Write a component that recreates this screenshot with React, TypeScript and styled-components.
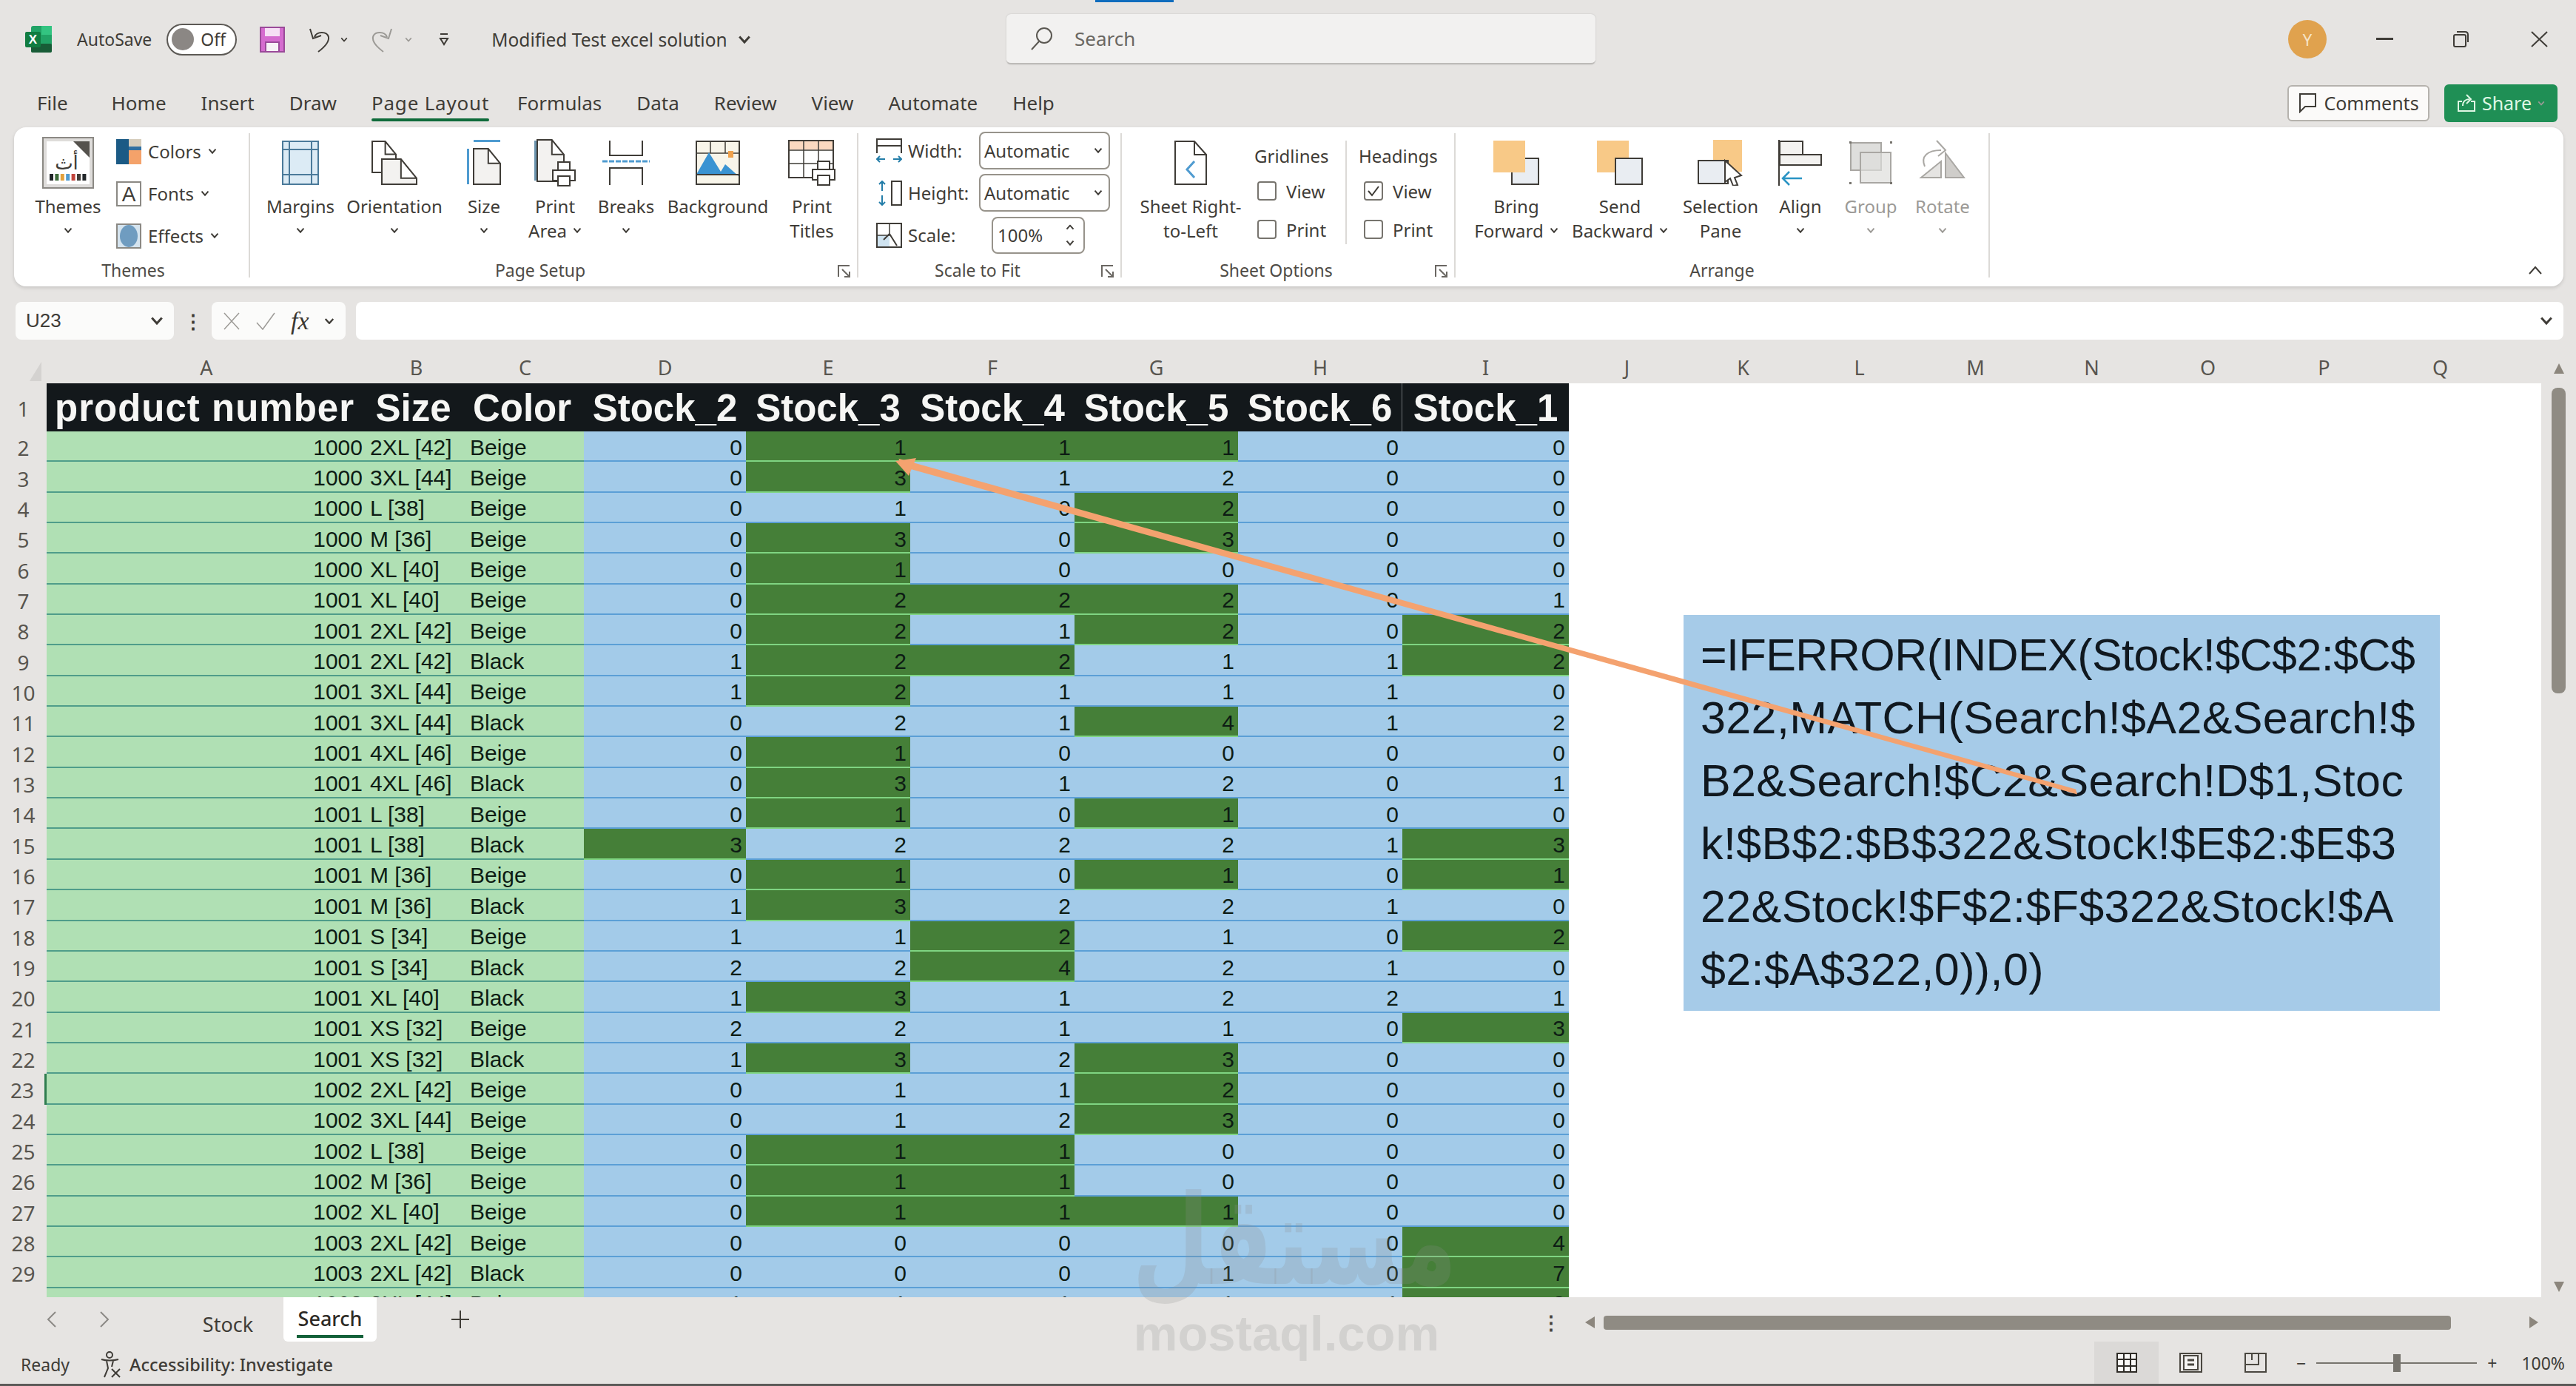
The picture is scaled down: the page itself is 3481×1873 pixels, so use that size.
import React, { FC, ReactNode } from 'react';
import styled, { createGlobalStyle } from 'styled-components';

const CHROME = '#e6e4e2';
const INK = '#3f3c37';
const SOFT = '#9c9a96';
const BLUE = '#4f9bd0';
const ORANGE = '#f8c987';
const COLS = '63px 432px 135px 159px 219px 222px 222px 221px 222px 225px';
const FONT = `'Noto Sans', 'Open Sans', sans-serif`;
const SHEET_FONT = `'Liberation Sans', Arial, sans-serif`;

const GlobalStyle = createGlobalStyle`
  html, body {
    margin: 0;
    padding: 0;
    background: ${CHROME};
  }
  body {
    font-family: ${FONT};
    color: ${INK};
  }
`;

const Page = styled.div`
  position: relative;
  width: 3481px;
  height: 1873px;
  overflow: hidden;
  display: flex;
  flex-direction: column;
  background: ${CHROME};
`;

/* ---------- title bar ---------- */

const TitleRow = styled.div`
  height: 106px;
  display: flex;
  align-items: center;
  flex-shrink: 0;
`;

const LeftCluster = styled.div`
  width: 1360px;
  display: flex;
  align-items: center;
  padding-left: 34px;
  box-sizing: border-box;
`;

const TitleItem = styled.div<{ $ml?: number }>`
  margin-left: ${(p) => p.$ml ?? 0}px;
  display: flex;
  align-items: center;
`;

const AutoSave = styled.span`
  font-size: 23px;
  white-space: nowrap;
`;

const Toggle = styled.div`
  width: 95px;
  height: 43px;
  box-sizing: border-box;
  border: 2px solid #5c5955;
  border-radius: 22px;
  background: #fff;
  display: flex;
  align-items: center;
  padding-left: 5px;
  gap: 9px;
  font-size: 23px;
`;

const Knob = styled.span`
  width: 30px;
  height: 30px;
  border-radius: 50%;
  background: #8b8784;
`;

const DocTitle = styled.span`
  font-size: 24.5px;
  white-space: nowrap;
`;

const TopMark = styled.div`
  position: absolute;
  left: 1480px;
  top: 0;
  width: 106px;
  height: 3px;
  background: #0f6cbd;
`;

const SearchBox = styled.div`
  width: 796px;
  height: 68px;
  box-sizing: border-box;
  background: #f2f1f0;
  border-radius: 6px;
  border-bottom: 2px solid #bdbbb8;
  box-shadow: 0 0 2px rgba(0, 0, 0, 0.18);
  display: flex;
  align-items: center;
  padding-left: 31px;
  gap: 29px;
  font-size: 26px;
  color: #6a6762;
`;

const RightCluster = styled.div`
  flex: 1;
  display: flex;
  align-items: center;
  justify-content: flex-end;
  padding-right: 38px;
`;

const Avatar = styled.div`
  width: 52px;
  height: 52px;
  border-radius: 50%;
  background: #e0a24e;
  color: #f6e3c6;
  font-size: 22px;
  display: flex;
  align-items: center;
  justify-content: center;
`;

/* ---------- menu ---------- */

const MenuRow = styled.div`
  height: 66px;
  flex-shrink: 0;
  display: flex;
  align-items: center;
  padding-left: 50px;
  gap: 47px;
  position: relative;
`;

const MenuItem = styled.span<{ $active?: boolean; $mr?: number }>`
  font-size: 26px;
  white-space: nowrap;
  position: relative;
  margin-right: ${(p) => p.$mr ?? 0}px;
  line-height: 40px;
  letter-spacing: ${(p) => (p.$active ? '0.8px' : '0')};
  &::after {
    content: '';
    display: ${(p) => (p.$active ? 'block' : 'none')};
    position: absolute;
    left: 0;
    right: 0;
    bottom: -5px;
    height: 4px;
    background: #0f6b3a;
    border-radius: 2px;
  }
`;

const RightActions = styled.div`
  margin-left: auto;
  margin-right: 25px;
  display: flex;
  align-items: center;
  gap: 20px;
`;

const CommentsButton = styled.div`
  width: 192px;
  height: 49px;
  box-sizing: border-box;
  background: #fbfaf9;
  border: 2px solid #b5b2ad;
  border-radius: 6px;
  display: flex;
  align-items: center;
  justify-content: center;
  gap: 9px;
  font-size: 25px;
`;

const ShareButton = styled.div`
  width: 153px;
  height: 51px;
  box-sizing: border-box;
  background: #1f8f55;
  border-radius: 6px;
  color: #dff7e4;
  display: flex;
  align-items: center;
  justify-content: center;
  gap: 8px;
  font-size: 25px;
`;

/* ---------- ribbon ---------- */

const Ribbon = styled.div`
  margin-left: 19px;
  width: 3445px;
  height: 215px;
  flex-shrink: 0;
  box-sizing: border-box;
  background: #fff;
  border-radius: 16px;
  box-shadow: 0 2px 5px rgba(0, 0, 0, 0.14);
  display: flex;
  padding: 8px 0 12px;
  position: relative;
`;

const Group = styled.div<{ $w: number }>`
  width: ${(p) => p.$w}px;
  height: 195px;
  flex-shrink: 0;
  box-sizing: border-box;
  border-right: 2px solid #dcdad7;
  display: flex;
  flex-direction: column;
  position: relative;
`;

const GroupBody = styled.div<{ $pl?: number; $flush?: boolean }>`
  flex: 1;
  min-height: 0;
  display: flex;
  align-items: flex-start;
  padding-left: ${(p) => p.$pl ?? 0}px;
  padding-top: ${(p) => (p.$flush ? 0 : 10)}px;
`;

const GroupLabel = styled.div<{ $pr?: number; $pl?: number }>`
  height: 32px;
  margin-bottom: -6px;
  line-height: 32px;
  font-size: 23px;
  text-align: center;
  color: #4e4b46;
  padding-right: ${(p) => p.$pr ?? 0}px;
  padding-left: ${(p) => p.$pl ?? 0}px;
`;

const Launcher = styled.svg`
  position: absolute;
  right: 8px;
  bottom: -1px;
`;

const BigButton = styled.div<{ $w: number; $muted?: boolean }>`
  width: ${(p) => p.$w}px;
  flex-shrink: 0;
  display: flex;
  flex-direction: column;
  align-items: center;
  color: ${(p) => (p.$muted ? SOFT : INK)};
  font-size: 24px;
`;

const IconSlot = styled.div`
  height: 60px;
  display: flex;
  align-items: center;
  justify-content: center;
  margin-bottom: 12px;
`;

const BigLine = styled.div`
  height: 33px;
  line-height: 33px;
  white-space: nowrap;
  display: flex;
  align-items: center;
  gap: 8px;
`;

const SmallStack = styled.div`
  margin-left: 6px;
  margin-top: -14px;
  display: flex;
  flex-direction: column;
`;

const SmallRow = styled.div`
  height: 57px;
  display: flex;
  align-items: center;
  gap: 9px;
  font-size: 24px;
`;

const FieldStack = styled.div`
  display: flex;
  flex-direction: column;
  gap: 6px;
  margin-top: -2px;
`;

const Field = styled.div`
  height: 51px;
  display: flex;
  align-items: center;
  font-size: 24px;
`;

const FieldLabel = styled.span`
  width: 96px;
  margin-left: 8px;
  white-space: nowrap;
`;

const SelectBox = styled.div`
  width: 177px;
  height: 51px;
  box-sizing: border-box;
  border: 2px solid #97938b;
  border-radius: 8px;
  display: flex;
  align-items: center;
  justify-content: space-between;
  padding: 0 8px 0 5px;
  font-size: 24px;
`;

const SpinBox = styled.div`
  width: 126px;
  height: 50px;
  box-sizing: border-box;
  margin-left: 17px;
  border: 2px solid #97938b;
  border-radius: 8px;
  display: flex;
  align-items: center;
  justify-content: space-between;
  padding: 0 12px 0 6px;
  font-size: 24px;
`;

const SpinArrows = styled.div`
  display: flex;
  flex-direction: column;
  gap: 12px;
`;

const SpinUp = styled.span`
  display: flex;
  transform: scaleY(-1);
`;

const OptionColumn = styled.div<{ $w: number; $pl?: number; $divider?: boolean }>`
  width: ${(p) => p.$w}px;
  box-sizing: border-box;
  padding-left: ${(p) => p.$pl ?? 0}px;
  border-right: ${(p) => (p.$divider ? '2px solid #dcdad7' : 'none')};
  height: 140px;
  font-size: 24px;
`;

const OptionHead = styled.div`
  height: 42px;
  line-height: 42px;
`;

const OptionRow = styled.div<{ $indent?: number }>`
  height: 52px;
  display: flex;
  align-items: center;
  gap: 13px;
  padding-left: ${(p) => p.$indent ?? 0}px;
`;

const CheckBox = styled.span`
  width: 26px;
  height: 26px;
  box-sizing: border-box;
  border: 2px solid #77746e;
  border-radius: 4px;
  display: flex;
  align-items: center;
  justify-content: center;
`;

const CollapseButton = styled.svg`
  position: absolute;
  right: 28px;
  bottom: 16px;
`;

/* ---------- formula bar ---------- */

const FormulaBar = styled.div`
  height: 51px;
  margin-top: 21px;
  flex-shrink: 0;
  padding-left: 21px;
  display: flex;
  align-items: center;
`;

const NameBox = styled.div`
  width: 214px;
  height: 51px;
  box-sizing: border-box;
  background: #fbfbfa;
  border-radius: 8px;
  display: flex;
  align-items: center;
  justify-content: space-between;
  padding: 0 14px;
  font-size: 26px;
  font-family: ${SHEET_FONT};
`;

const BarDots = styled.div`
  width: 51px;
  text-align: center;
  font-size: 26px;
  font-weight: 700;
  line-height: 40px;
`;

const FxBox = styled.div`
  width: 181px;
  height: 51px;
  box-sizing: border-box;
  background: #fbfbfa;
  border-radius: 8px;
  display: flex;
  align-items: center;
  padding-left: 15px;
  gap: 20px;
`;

const FxMark = styled.span`
  font-family: 'Liberation Serif', serif;
  font-style: italic;
  font-size: 34px;
  font-weight: 400;
  color: #3a3731;
`;

const FormulaInput = styled.div`
  margin-left: 14px;
  width: 2983px;
  height: 51px;
  box-sizing: border-box;
  background: #fff;
  border-radius: 8px;
  display: flex;
  align-items: center;
  justify-content: flex-end;
  padding-right: 14px;
`;

/* ---------- sheet ---------- */

const SheetArea = styled.div`
  height: 1294px;
  flex-shrink: 0;
  display: flex;
`;

const GridPane = styled.div`
  width: 3434px;
  display: flex;
  flex-direction: column;
  overflow: hidden;
`;

const ColumnHeaders = styled.div`
  height: 59px;
  flex-shrink: 0;
  display: grid;
  grid-template-columns: ${COLS} repeat(8, 157px) 1fr;
  position: relative;
`;

const ColumnLetter = styled.div`
  display: flex;
  align-items: flex-end;
  justify-content: center;
  padding-bottom: 3px;
  font-size: 27px;
  color: #58554f;
  line-height: 36px;
`;

const SelectAll = styled.svg`
  position: absolute;
  left: 40px;
  bottom: 3px;
`;

const Rows = styled.div`
  flex: 1;
  background: #fff;
  overflow: hidden;
`;

const HeaderRow = styled.div`
  height: 65px;
  display: grid;
  grid-template-columns: ${COLS};
  width: 2120px;
`;

const HeaderCell = styled.div<{ $wide?: boolean; $rule?: boolean; $nudge?: boolean }>`
  background: #13181b;
  color: #f6f6f4;
  font-family: ${SHEET_FONT};
  font-weight: 700;
  font-size: 51px;
  display: flex;
  align-items: center;
  justify-content: center;
  white-space: nowrap;
  box-sizing: border-box;
  padding-top: 2px;
  padding-right: ${(p) => (p.$nudge ? 8 : p.$wide ? 5 : 0)}px;
  letter-spacing: ${(p) => (p.$wide ? '1px' : '0')};
  border-right: ${(p) => (p.$rule ? '1px solid #6d7376' : 'none')};
`;

const DataRow = styled.div`
  height: 41.35px;
  display: grid;
  grid-template-columns: ${COLS};
  width: 2120px;
`;

const RowNumber = styled.div<{ $current?: boolean }>`
  background: ${CHROME};
  font-size: 28px;
  color: #58554f;
  display: flex;
  align-items: center;
  justify-content: center;
  box-sizing: border-box;
  padding-top: 3px;
  border-right: ${(p) => (p.$current ? '3px solid #2f7d4f' : 'none')};
  line-height: 1;
`;

type Tone = 'green' | 'blue' | 'dark';

const toneFill: Record<Tone, string> = { green: '#b0e0b4', blue: '#a3cbe9', dark: '#457f38' };
const toneLine: Record<Tone, string> = { green: '#4f9d8a', blue: '#5b9fd6', dark: '#7fd582' };

const Cell = styled.div<{ $tone: Tone; $end?: boolean }>`
  background: ${(p) => toneFill[p.$tone]};
  border-bottom: 2px solid ${(p) => toneLine[p.$tone]};
  box-sizing: border-box;
  font-family: ${SHEET_FONT};
  font-size: 30px;
  color: #0d1c14;
  display: flex;
  align-items: center;
  justify-content: ${(p) => (p.$end ? 'flex-end' : 'flex-start')};
  padding: 4px 5px 0;
  white-space: nowrap;
  overflow: hidden;
`;

const VScroll = styled.div`
  flex: 1;
  display: flex;
  flex-direction: column;
  align-items: center;
  padding: 31px 0 4px;
  box-sizing: border-box;
`;

const VThumb = styled.div`
  width: 19px;
  height: 413px;
  margin-top: 16px;
  margin-bottom: auto;
  background: #8f8b83;
  border-radius: 8px;
`;

/* ---------- tabs and status ---------- */

const TabBar = styled.div`
  height: 60px;
  flex-shrink: 0;
  display: flex;
  align-items: center;
  position: relative;
`;

const NavArrow = styled.div<{ $first?: boolean }>`
  width: 71px;
  margin-left: ${(p) => (p.$first ? 34 : 0)}px;
  display: flex;
  justify-content: center;
`;

const SheetTab = styled.div<{ $active?: boolean }>`
  width: ${(p) => (p.$active ? 126 : 72)}px;
  height: 60px;
  margin-left: ${(p) => (p.$active ? 39 : 96)}px;
  background: ${(p) => (p.$active ? '#fff' : 'transparent')};
  border-radius: 0 0 6px 6px;
  font-size: 27px;
  font-weight: ${(p) => (p.$active ? 500 : 400)};
  color: ${(p) => (p.$active ? '#2e2b27' : INK)};
  display: flex;
  flex-direction: column;
  align-items: center;
  justify-content: ${(p) => (p.$active ? 'flex-start' : 'center')};
  padding-top: ${(p) => (p.$active ? 10 : 12)}px;
  box-sizing: border-box;
`;

const TabUnderline = styled.span`
  width: 90px;
  height: 4px;
  margin-top: 4px;
  background: #14613a;
`;

const AddSheet = styled.div`
  margin-left: 100px;
  display: flex;
`;

const TabScroll = styled.div`
  margin-left: auto;
  width: 1401px;
  display: flex;
  align-items: center;
  box-sizing: border-box;
  padding-top: 8px;
`;

const TabDots = styled.div`
  width: 32px;
  margin-right: 28px;
  text-align: center;
  font-size: 26px;
  font-weight: 700;
  line-height: 30px;
  color: #45423d;
`;

const HThumb = styled.div`
  width: 1145px;
  height: 19px;
  background: #8f8b83;
  border-radius: 4px;
  margin-left: 9px;
  margin-right: 103px;
`;

const StatusBar = styled.div`
  height: 57px;
  box-sizing: border-box;
  flex-shrink: 0;
  display: flex;
  align-items: center;
  font-size: 23px;
  padding-left: 28px;
`;

const ReadyText = styled.span`
  padding-top: 4px;
`;

const StatusAccess = styled.div`
  margin-left: 41px;
  padding-top: 4px;
  display: flex;
  align-items: center;
  gap: 10px;
  font-size: 23.5px;
  font-weight: 500;
`;

const ViewButtons = styled.div`
  margin-left: auto;
  display: flex;
  align-items: stretch;
  height: 100%;
`;

const ViewButton = styled.div<{ $on?: boolean }>`
  width: 87px;
  display: flex;
  align-items: center;
  justify-content: center;
  background: ${(p) => (p.$on ? '#dbd9d7' : 'transparent')};
`;

const ZoomBar = styled.div`
  margin-left: 12px;
  margin-right: 15px;
  display: flex;
  align-items: center;
  font-size: 23px;
`;

const ZoomTrack = styled.div`
  width: 217px;
  height: 2px;
  margin: 0 14px;
  background: #77746e;
  position: relative;
`;

const ZoomThumb = styled.span`
  position: absolute;
  left: 104px;
  top: -11px;
  width: 10px;
  height: 24px;
  background: #77746e;
`;

const ZoomText = styled.span`
  margin-left: 33px;
`;

const BottomStrip = styled.div`
  height: 3px;
  flex-shrink: 0;
  background: #5b5a58;
`;

/* ---------- overlays ---------- */

const FormulaNote = styled.div`
  position: absolute;
  left: 2275px;
  top: 831px;
  width: 1022px;
  height: 535px;
  box-sizing: border-box;
  background: #a6cbe8;
  padding: 12px 0 0 23px;
  font-family: ${SHEET_FONT};
  font-size: 61px;
  line-height: 85px;
  color: #10181f;
  white-space: nowrap;
`;

const NoteLine = styled.div<{ $tight?: boolean }>`
  letter-spacing: ${(p) => (p.$tight ? '-0.55px' : '0.38px')};
`;

const ArrowLayer = styled.svg`
  position: absolute;
  left: 0;
  top: 0;
  pointer-events: none;
`;

const Watermark = styled.div`
  position: absolute;
  left: 1530px;
  top: 1622px;
  width: 417px;
  text-align: center;
  color: rgba(140, 140, 140, 0.22);
  pointer-events: none;
`;

const WatermarkLogo = styled.div`
  font-family: 'DejaVu Sans', sans-serif;
  font-weight: 700;
  font-size: 120px;
  line-height: 140px;
  white-space: nowrap;
  transform: scaleY(1.4);
  transform-origin: 50% 75%;
`;

const WatermarkName = styled.div`
  font-family: ${SHEET_FONT};
  font-weight: 700;
  font-size: 67px;
  line-height: 80px;
  white-space: nowrap;
`;

/* ---------- drawings ---------- */

const Caret: FC<{ muted?: boolean; size?: number }> = ({ muted, size = 12 }) => (
  <svg width={size} height={size * 0.7} viewBox="0 0 12 8" fill="none">
    <path d="M1.5 1.5 6 6.5l4.5-5" stroke={muted ? SOFT : INK} strokeWidth="2" />
  </svg>
);

const Chevron: FC<{ dir: 'left' | 'right'; color?: string }> = ({ dir, color = '#8c8a86' }) => (
  <svg width="14" height="24" viewBox="0 0 14 24" fill="none">
    <path d={dir === 'left' ? 'M12 2 2 12l10 10' : 'M2 2l10 10L2 22'} stroke={color} strokeWidth="2" />
  </svg>
);

const Tri: FC<{ dir: 'up' | 'down' | 'left' | 'right' }> = ({ dir }) => {
  const d = {
    up: 'M9 1 L16 15 H2 Z',
    down: 'M2 1 H16 L9 15 Z',
    left: 'M15 1 V17 L2 9 Z',
    right: 'M3 1 V17 L15 9 Z',
  }[dir];
  return (
    <svg width="18" height="18" viewBox="0 0 18 18">
      <path d={d} fill="#8c867d" />
    </svg>
  );
};

const ExcelLogo = () => (
  <svg width="36" height="36" viewBox="0 0 36 36">
    <rect x="8" y="0" width="28" height="36" rx="3" fill="#21a366" />
    <rect x="22" y="0" width="14" height="12" fill="#33c481" />
    <rect x="8" y="24" width="28" height="12" rx="2" fill="#185c37" />
    <rect x="0" y="8" width="21" height="21" rx="2" fill="#107c41" />
    <text x="10.5" y="24" textAnchor="middle" fontFamily="Liberation Sans" fontWeight="700" fontSize="17" fill="#fff">X</text>
  </svg>
);

const SaveIcon = () => (
  <svg width="34" height="35" viewBox="0 0 34 35">
    <rect x="1" y="1" width="32" height="33" fill="#d56ccf" stroke="#9a4a99" strokeWidth="2" />
    <rect x="7" y="2" width="20" height="11" fill="#f6dff5" />
    <rect x="8" y="21" width="18" height="13" fill="#f6f1f6" stroke="#9a4a99" strokeWidth="2" />
  </svg>
);

const UndoIcon: FC<{ muted?: boolean; flip?: boolean }> = ({ muted, flip }) => (
  <svg width="31" height="35" viewBox="0 0 31 35" fill="none" transform={flip ? 'scale(-1 1)' : undefined}>
    <path d="M9 14C12 6 26 6 28 14c1 6-6 14-14 20M3 3l4 13 11-4" stroke={muted ? SOFT : INK} strokeWidth="2" />
  </svg>
);

const QatMore = () => (
  <svg width="16" height="20" viewBox="0 0 16 20" fill="none">
    <path d="M3 3h10" stroke={INK} strokeWidth="2" />
    <path d="M3 9h10l-5 8z" fill="none" stroke={INK} strokeWidth="2" />
  </svg>
);

const SearchIcon = () => (
  <svg width="32" height="32" viewBox="0 0 32 32" fill="none">
    <circle cx="20" cy="12" r="10" stroke="#5a5751" strokeWidth="2" />
    <path d="M13 20 3 31" stroke="#5a5751" strokeWidth="2" />
  </svg>
);

const WindowIcon: FC<{ kind: 'min' | 'restore' | 'close' }> = ({ kind }) => {
  if (kind === 'min') {
    return (
      <svg width="23" height="4" viewBox="0 0 23 4">
        <rect width="23" height="3" fill={INK} />
      </svg>
    );
  }
  if (kind === 'restore') {
    return (
      <svg width="21" height="22" viewBox="0 0 21 22" fill="none">
        <rect x="1" y="5" width="16" height="16" rx="2" stroke={INK} strokeWidth="2" />
        <path d="M5 1h11c3 0 4 1 4 4v10" stroke={INK} strokeWidth="2" />
      </svg>
    );
  }
  return (
    <svg width="23" height="22" viewBox="0 0 23 22" fill="none">
      <path d="M1 1l21 20M22 1 1 21" stroke={INK} strokeWidth="2" />
    </svg>
  );
};

const CommentIcon = () => (
  <svg width="26" height="28" viewBox="0 0 26 28" fill="none">
    <path d="M2 2h22v17H10l-7 7V2z" stroke={INK} strokeWidth="2" />
  </svg>
);

const ShareIcon = () => (
  <svg width="26" height="26" viewBox="0 0 26 26" fill="none">
    <path d="M7 11H2v13h22V11h-5" stroke="#dff7e4" strokeWidth="2" />
    <path d="M8 17c0-6 4-9 9-9M13 2l6 6-6 6" stroke="#dff7e4" strokeWidth="2" />
  </svg>
);

const ThemesIcon = () => (
  <svg width="70" height="70" viewBox="0 0 70 70">
    <rect x="1" y="1" width="68" height="68" fill="#dedcda" stroke="#8b8984" strokeWidth="2" />
    <rect x="6" y="6" width="58" height="58" fill="#fff" />
    <path d="M42 6h22v22z" fill="#55524d" />
    <text x="33" y="44" textAnchor="middle" fontFamily="DejaVu Sans" fontSize="26" fill={INK}>أث</text>
    {['#23272a', '#3d6b3a', '#e3a13c', '#4f9bd0', '#c2453d', '#3f3c37', '#23272a'].map((c, i) => (
      <rect key={c + i} x={10 + i * 7.4} y="50" width="5" height="9" fill={c} />
    ))}
  </svg>
);

const ColorsIcon = () => (
  <svg width="34" height="34" viewBox="0 0 34 34">
    <rect x="0" y="0" width="17" height="34" fill="#1b5a85" />
    <rect x="17" y="0" width="17" height="10" fill="#d5ccbc" />
    <rect x="17" y="10" width="17" height="5" fill="#2f6ea0" />
    <rect x="17" y="15" width="17" height="19" fill="#f4a26a" />
  </svg>
);

const FontsIcon = () => (
  <svg width="34" height="34" viewBox="0 0 34 34">
    <rect x="1" y="1" width="32" height="32" fill="#fff" stroke="#8b8984" strokeWidth="2" />
    <text x="17" y="27" textAnchor="middle" fontFamily="Liberation Sans" fontSize="28" fill={INK}>A</text>
  </svg>
);

const EffectsIcon = () => (
  <svg width="34" height="34" viewBox="0 0 34 34">
    <rect x="1" y="1" width="32" height="32" fill="#d5e4ef" stroke="#8b8984" strokeWidth="2" />
    <ellipse cx="17" cy="17" rx="12" ry="15" fill="#6f9cc0" />
  </svg>
);

const MarginsIcon = () => (
  <svg width="50" height="60" viewBox="0 0 50 60" fill="#dcebf5" stroke="#4b7a9a" strokeWidth="2">
    <rect x="1" y="1" width="48" height="58" />
    <path d="M10 1v58M40 1v58M1 12h48M1 46h48" fill="none" />
  </svg>
);

const DogEar: FC<{ x: number; y: number; w: number; h: number; fill?: string }> = ({ x, y, w, h, fill = '#f3f2f0' }) => (
  <path
    d={`M${x} ${y}h${w * 0.55}l${w * 0.45} ${w * 0.55}V${y + h}H${x}z M${x + w * 0.55} ${y}v${w * 0.55}h${w * 0.45}`}
    fill={fill}
    stroke={INK}
    strokeWidth="2"
  />
);

const OrientationIcon = () => (
  <svg width="62" height="60" viewBox="0 0 62 60">
    <DogEar x={1} y={1} w={32} h={42} fill="#fff" />
    <DogEar x={14} y={25} w={47} h={34} />
  </svg>
);

const SizeIcon = () => (
  <svg width="46" height="62" viewBox="0 0 46 62">
    <rect x="9" y="0" width="36" height="3" fill={BLUE} />
    <rect x="0" y="12" width="3" height="48" fill={BLUE} />
    <DogEar x={9} y={12} w={36} h={48} />
  </svg>
);

const PrinterMark: FC<{ x: number; y: number }> = ({ x, y }) => (
  <g transform={`translate(${x} ${y})`} fill="#fff" stroke={INK} strokeWidth="2">
    <rect x="8" y="1" width="16" height="12" />
    <rect x="1" y="12" width="30" height="14" />
    <rect x="8" y="20" width="16" height="13" />
  </g>
);

const PrintAreaIcon = () => (
  <svg width="58" height="64" viewBox="0 0 58 64">
    <rect x="1" y="2" width="5" height="54" fill="#6b93ad" />
    <DogEar x={5} y={1} w={36} h={56} />
    <PrinterMark x={25} y={30} />
  </svg>
);

const BreaksIcon = () => (
  <svg width="64" height="60" viewBox="0 0 64 60" fill="none">
    <path d="M10 0v20h44V0M10 60V37h44v23" stroke={INK} strokeWidth="2" />
    <path d="M0 28h64" stroke={BLUE} strokeWidth="3" strokeDasharray="7 2" />
  </svg>
);

const BackgroundIcon = () => (
  <svg width="60" height="60" viewBox="0 0 60 60">
    <rect x="1" y="1" width="58" height="58" fill="#f8f5ea" stroke={INK} strokeWidth="2" />
    <path d="M1 17h58M20 1v16M40 1v16" stroke={INK} strokeWidth="1.5" />
    <path d="M2 44 18 16l16 26 6-10 18 16v-2H2z" fill="#3a93d2" />
    <rect x="44" y="14" width="7" height="9" fill="#f0a24d" />
    <path d="M1 46h58" stroke={INK} strokeWidth="2" />
  </svg>
);

const PrintTitlesIcon = () => (
  <svg width="64" height="62" viewBox="0 0 64 62">
    <rect x="1" y="1" width="60" height="50" fill="#fff" stroke={INK} strokeWidth="2" />
    <rect x="2" y="2" width="58" height="11" fill="#fbd9c0" />
    <path d="M1 14h60M1 32h60M21 1v50M41 1v50" stroke={INK} strokeWidth="1.5" fill="none" />
    <PrinterMark x={32} y={28} />
  </svg>
);

const WidthIcon = () => (
  <svg width="35" height="34" viewBox="0 0 35 34" fill="none">
    <path d="M1 20V1h33v19M1 10h33" stroke={INK} strokeWidth="2" />
    <path d="M2 28h10M5 24l-4 4 4 4M33 28H23M30 24l4 4-4 4" stroke="#237da8" strokeWidth="2" />
  </svg>
);

const HeightIcon = () => (
  <svg width="35" height="34" viewBox="0 0 35 34" fill="none">
    <rect x="21" y="1" width="13" height="32" stroke={INK} strokeWidth="2" />
    <path d="M8 2v12M4 5l4-4 4 4M8 32V20M4 29l4 4 4-4" stroke="#237da8" strokeWidth="2" />
  </svg>
);

const ScaleIcon = () => (
  <svg width="35" height="34" viewBox="0 0 35 34" fill="none">
    <rect x="1" y="1" width="33" height="32" stroke={INK} strokeWidth="2" />
    <rect x="2" y="17" width="16" height="15" fill="#cfe3f0" />
    <path d="M1 17h17V1" stroke={INK} strokeWidth="1.5" />
    <path d="M18 15l10 16M18 15l-8 8" stroke={INK} strokeWidth="2" />
  </svg>
);

const RtlIcon = () => (
  <svg width="44" height="60" viewBox="0 0 44 60" fill="none">
    <path d="M1 1h26l16 18v40H1z M27 1v18h16" fill="#fff" stroke={INK} strokeWidth="2" />
    <path d="M27 28 17 39l10 11" stroke={BLUE} strokeWidth="3" />
  </svg>
);

const ForwardIcon = () => (
  <svg width="62" height="60" viewBox="0 0 62 60">
    <rect x="25" y="24" width="36" height="35" fill="#e9edf2" stroke={INK} strokeWidth="2" />
    <rect x="0" y="0" width="43" height="43" fill={ORANGE} />
  </svg>
);

const BackwardIcon = () => (
  <svg width="62" height="60" viewBox="0 0 62 60">
    <rect x="0" y="0" width="43" height="43" fill={ORANGE} />
    <rect x="25" y="24" width="36" height="35" fill="#e9edf2" stroke={INK} strokeWidth="2" />
  </svg>
);

const SelectionIcon = () => (
  <svg width="62" height="62" viewBox="0 0 62 62">
    <rect x="21" y="0" width="39" height="43" fill={ORANGE} />
    <rect x="1" y="28" width="40" height="31" fill="#e9edf2" stroke={INK} strokeWidth="2" />
    <path d="M37 28 59 48l-9 3 4 10-6 1-4-10-7 5z" fill="#fff" stroke={INK} strokeWidth="2" />
  </svg>
);

const AlignIcon = () => (
  <svg width="60" height="62" viewBox="0 0 60 62" fill="none">
    <path d="M1 0v62" stroke={INK} strokeWidth="2" />
    <rect x="2" y="2" width="31" height="26" fill="#f3f2f0" stroke={INK} strokeWidth="2" />
    <rect x="2" y="20" width="56" height="14" fill="#f3f2f0" stroke={INK} strokeWidth="2" />
    <path d="M32 52H6M15 43l-9 9 9 9" stroke="#2a94c4" strokeWidth="2.5" />
  </svg>
);

const GroupIcon = () => (
  <svg width="60" height="60" viewBox="0 0 60 60">
    <rect x="3" y="3" width="41" height="37" fill="#dededc" stroke="#a9a7a3" strokeWidth="2" />
    <rect x="16" y="16" width="41" height="41" fill="#dededc" stroke="#a9a7a3" strokeWidth="2" fillOpacity="0.7" />
    <path d="M1 1h3v3H1zM56 1h3v3h-3zM1 56h3v3H1zM56 56h3v3h-3z" fill="#77746e" />
  </svg>
);

const RotateIcon = () => (
  <svg width="64" height="62" viewBox="0 0 64 62">
    <path d="M36 18 61 51H36z" fill="#cfcdca" stroke="#a9a7a3" strokeWidth="2" />
    <path d="M3 51 30 29v22z" fill="#e5e4e2" stroke="#a9a7a3" strokeWidth="2" />
    <path d="M30 14C12 14 2 22 8 36M24 1l12 13-10 8" fill="none" stroke="#a9a7a3" strokeWidth="2" />
  </svg>
);

const LauncherIcon = () => (
  <Launcher width="18" height="18" viewBox="0 0 18 18" fill="none">
    <path d="M1 16V1h15" stroke="#6a6762" strokeWidth="2" />
    <path d="M6 6l10 10M9 16h7V9" stroke="#6a6762" strokeWidth="2" />
  </Launcher>
);

const CrossMark = () => (
  <svg width="24" height="24" viewBox="0 0 24 24" fill="none">
    <path d="M2 1l20 22M22 1 2 23" stroke="#9c9a96" strokeWidth="1.5" />
  </svg>
);

const TickMark = () => (
  <svg width="28" height="24" viewBox="0 0 28 24" fill="none">
    <path d="M2 14l8 9L26 1" stroke="#9c9a96" strokeWidth="1.5" />
  </svg>
);

const SmallTick = () => (
  <svg width="18" height="16" viewBox="0 0 18 16" fill="none">
    <path d="M2 8l5 6L16 2" stroke={INK} strokeWidth="2" />
  </svg>
);

const AccessIcon = () => (
  <svg width="30" height="36" viewBox="0 0 30 36" fill="none">
    <circle cx="13" cy="5" r="4" stroke={INK} strokeWidth="2" />
    <path d="M2 11c6 2 16 2 23 0M9 13l2 10-5 12M18 13l-2 8" stroke={INK} strokeWidth="2" />
    <path d="M16 24l11 11M27 24 16 35" stroke={INK} strokeWidth="2" />
  </svg>
);

const GridViewIcon = () => (
  <svg width="28" height="27" viewBox="0 0 28 27" fill="none" stroke="#2f2c27" strokeWidth="2">
    <rect x="1" y="1" width="26" height="25" fill="#faf9f7" />
    <path d="M1 9h26M1 18h26M10 1v25M19 1v25" />
  </svg>
);

const PageViewIcon = () => (
  <svg width="31" height="27" viewBox="0 0 31 27" fill="none" stroke="#4a4740" strokeWidth="2">
    <rect x="1" y="1" width="29" height="25" />
    <rect x="6" y="4" width="19" height="19" fill="#f5f4f2" />
    <path d="M11 10h9M11 16h9" strokeWidth="3" />
  </svg>
);

const BreakViewIcon = () => (
  <svg width="30" height="27" viewBox="0 0 30 27" fill="none" stroke="#4a4740" strokeWidth="2">
    <rect x="1" y="1" width="28" height="25" />
    <path d="M1 16h18V1M10 1v9" />
  </svg>
);

/* ---------- content ---------- */

const Big: FC<{
  w: number;
  icon: ReactNode;
  lines: string[];
  caret?: 'below' | 'inline';
  muted?: boolean;
}> = ({ w, icon, lines, caret, muted }) => (
  <BigButton $w={w} $muted={muted}>
    <IconSlot>{icon}</IconSlot>
    {lines.map((line, i) => (
      <BigLine key={line}>
        {line}
        {caret === 'inline' && i === lines.length - 1 && <Caret muted={muted} />}
      </BigLine>
    ))}
    {caret === 'below' && (
      <BigLine>
        <Caret muted={muted} />
      </BigLine>
    )}
  </BigButton>
);

const stockColumns = ['Stock_2', 'Stock_3', 'Stock_4', 'Stock_5', 'Stock_6', 'Stock_1'];

// value with * means the cell is filled dark green
const sheetRows: [string, string, string, string][] = [
  ['1000', '2XL [42]', 'Beige', '0 1* 1* 1* 0 0'],
  ['1000', '3XL [44]', 'Beige', '0 3* 1 2 0 0'],
  ['1000', 'L [38]', 'Beige', '0 1 0 2* 0 0'],
  ['1000', 'M [36]', 'Beige', '0 3* 0 3* 0 0'],
  ['1000', 'XL [40]', 'Beige', '0 1* 0 0 0 0'],
  ['1001', 'XL [40]', 'Beige', '0 2* 2* 2* 0 1'],
  ['1001', '2XL [42]', 'Beige', '0 2* 1 2* 0 2*'],
  ['1001', '2XL [42]', 'Black', '1 2* 2* 1 1 2*'],
  ['1001', '3XL [44]', 'Beige', '1 2* 1 1 1 0'],
  ['1001', '3XL [44]', 'Black', '0 2 1 4* 1 2'],
  ['1001', '4XL [46]', 'Beige', '0 1* 0 0 0 0'],
  ['1001', '4XL [46]', 'Black', '0 3* 1 2 0 1'],
  ['1001', 'L [38]', 'Beige', '0 1* 0 1* 0 0'],
  ['1001', 'L [38]', 'Black', '3* 2 2 2 1 3*'],
  ['1001', 'M [36]', 'Beige', '0 1* 0 1* 0 1*'],
  ['1001', 'M [36]', 'Black', '1 3* 2 2 1 0'],
  ['1001', 'S [34]', 'Beige', '1 1 2* 1 0 2*'],
  ['1001', 'S [34]', 'Black', '2 2 4* 2 1 0'],
  ['1001', 'XL [40]', 'Black', '1 3* 1 2 2 1'],
  ['1001', 'XS [32]', 'Beige', '2 2 1 1 0 3*'],
  ['1001', 'XS [32]', 'Black', '1 3* 2 3* 0 0'],
  ['1002', '2XL [42]', 'Beige', '0 1 1 2* 0 0'],
  ['1002', '3XL [44]', 'Beige', '0 1 2 3* 0 0'],
  ['1002', 'L [38]', 'Beige', '0 1* 1* 0 0 0'],
  ['1002', 'M [36]', 'Beige', '0 1* 1* 0 0 0'],
  ['1002', 'XL [40]', 'Beige', '0 1* 1* 1* 0 0'],
  ['1003', '2XL [42]', 'Beige', '0 0 0 0 0 4*'],
  ['1003', '2XL [42]', 'Black', '0 0 0 1 0 7*'],
  ['1003', '3XL [44]', 'Beige', '1 1 1 1 1 2*'],
];

const letters = ['A', 'B', 'C', 'D', 'E', 'F', 'G', 'H', 'I', 'J', 'K', 'L', 'M', 'N', 'O', 'P', 'Q'];

const noteLines = [
  '=IFERROR(INDEX(Stock!$C$2:$C$',
  '322,MATCH(Search!$A2&Search!$',
  'B2&Search!$C2&Search!D$1,Stoc',
  'k!$B$2:$B$322&Stock!$E$2:$E$3',
  '22&Stock!$F$2:$F$322&Stock!$A',
  '$2:$A$322,0)),0)',
];

const App: FC = () => (
  <Page>
    <GlobalStyle />
    <TopMark />

    <TitleRow>
      <LeftCluster>
        <ExcelLogo />
        <TitleItem $ml={34}>
          <AutoSave>AutoSave</AutoSave>
        </TitleItem>
        <TitleItem $ml={20}>
          <Toggle>
            <Knob />
            Off
          </Toggle>
        </TitleItem>
        <TitleItem $ml={31}>
          <SaveIcon />
        </TitleItem>
        <TitleItem $ml={31}>
          <UndoIcon />
        </TitleItem>
        <TitleItem $ml={13}>
          <Caret size={10} />
        </TitleItem>
        <TitleItem $ml={31}>
          <UndoIcon muted flip />
        </TitleItem>
        <TitleItem $ml={15}>
          <Caret size={10} muted />
        </TitleItem>
        <TitleItem $ml={35}>
          <QatMore />
        </TitleItem>
        <TitleItem $ml={56}>
          <DocTitle>Modified Test excel solution</DocTitle>
        </TitleItem>
        <TitleItem $ml={14}>
          <Caret size={18} />
        </TitleItem>
      </LeftCluster>
      <SearchBox>
        <SearchIcon />
        Search
      </SearchBox>
      <RightCluster>
        <Avatar>Y</Avatar>
        <TitleItem $ml={67}>
          <WindowIcon kind="min" />
        </TitleItem>
        <TitleItem $ml={81}>
          <WindowIcon kind="restore" />
        </TitleItem>
        <TitleItem $ml={84}>
          <WindowIcon kind="close" />
        </TitleItem>
      </RightCluster>
    </TitleRow>

    <MenuRow>
      <MenuItem $mr={12}>File</MenuItem>
      <MenuItem>Home</MenuItem>
      <MenuItem>Insert</MenuItem>
      <MenuItem>Draw</MenuItem>
      <MenuItem $active $mr={-9}>
        Page Layout
      </MenuItem>
      <MenuItem>Formulas</MenuItem>
      <MenuItem>Data</MenuItem>
      <MenuItem>Review</MenuItem>
      <MenuItem>View</MenuItem>
      <MenuItem>Automate</MenuItem>
      <MenuItem>Help</MenuItem>
      <RightActions>
        <CommentsButton>
          <CommentIcon />
          Comments
        </CommentsButton>
        <ShareButton>
          <ShareIcon />
          Share
          <Caret size={10} muted />
        </ShareButton>
      </RightActions>
    </MenuRow>

    <Ribbon>
      <Group $w={319}>
        <GroupBody $pl={14}>
          <Big w={118} icon={<ThemesIcon />} lines={['Themes']} caret="below" />
          <SmallStack>
            <SmallRow>
              <ColorsIcon />
              Colors
              <Caret />
            </SmallRow>
            <SmallRow>
              <FontsIcon />
              Fonts
              <Caret />
            </SmallRow>
            <SmallRow>
              <EffectsIcon />
              Effects
              <Caret />
            </SmallRow>
          </SmallStack>
        </GroupBody>
        <GroupLabel $pl={5}>Themes</GroupLabel>
      </Group>

      <Group $w={822}>
        <GroupBody $pl={14}>
          <Big w={108} icon={<MarginsIcon />} lines={['Margins']} caret="below" />
          <Big w={146} icon={<OrientationIcon />} lines={['Orientation']} caret="below" />
          <Big w={96} icon={<SizeIcon />} lines={['Size']} caret="below" />
          <Big w={96} icon={<PrintAreaIcon />} lines={['Print', 'Area']} caret="inline" />
          <Big w={96} icon={<BreaksIcon />} lines={['Breaks']} caret="below" />
          <Big w={152} icon={<BackgroundIcon />} lines={['Background']} />
          <Big w={102} icon={<PrintTitlesIcon />} lines={['Print', 'Titles']} />
        </GroupBody>
        <GroupLabel $pr={36}>Page Setup</GroupLabel>
        <LauncherIcon />
      </Group>

      <Group $w={356}>
        <GroupBody $pl={24} $flush>
          <FieldStack>
            <Field>
              <WidthIcon />
              <FieldLabel>Width:</FieldLabel>
              <SelectBox>
                Automatic
                <Caret />
              </SelectBox>
            </Field>
            <Field>
              <HeightIcon />
              <FieldLabel>Height:</FieldLabel>
              <SelectBox>
                Automatic
                <Caret />
              </SelectBox>
            </Field>
            <Field>
              <ScaleIcon />
              <FieldLabel>Scale:</FieldLabel>
              <SpinBox>
                100%
                <SpinArrows>
                  <SpinUp>
                    <Caret size={12} />
                  </SpinUp>
                  <Caret size={12} />
                </SpinArrows>
              </SpinBox>
            </Field>
          </FieldStack>
        </GroupBody>
        <GroupLabel $pr={32}>Scale to Fit</GroupLabel>
        <LauncherIcon />
      </Group>

      <Group $w={451}>
        <GroupBody $pl={7}>
          <Big w={172} icon={<RtlIcon />} lines={['Sheet Right-', 'to-Left']} />
          <OptionColumn $w={125} $divider>
            <OptionHead>Gridlines</OptionHead>
            <OptionRow $indent={4}>
              <CheckBox />
              View
            </OptionRow>
            <OptionRow $indent={4}>
              <CheckBox />
              Print
            </OptionRow>
          </OptionColumn>
          <OptionColumn $w={130} $pl={16}>
            <OptionHead>Headings</OptionHead>
            <OptionRow $indent={7}>
              <CheckBox>
                <SmallTick />
              </CheckBox>
              View
            </OptionRow>
            <OptionRow $indent={7}>
              <CheckBox />
              Print
            </OptionRow>
          </OptionColumn>
        </GroupBody>
        <GroupLabel $pr={32}>Sheet Options</GroupLabel>
        <LauncherIcon />
      </Group>

      <Group $w={722}>
        <GroupBody $pl={12}>
          <Big w={140} icon={<ForwardIcon />} lines={['Bring', 'Forward']} caret="inline" />
          <Big w={140} icon={<BackwardIcon />} lines={['Send', 'Backward']} caret="inline" />
          <Big w={132} icon={<SelectionIcon />} lines={['Selection', 'Pane']} />
          <Big w={84} icon={<AlignIcon />} lines={['Align']} caret="below" />
          <Big w={106} icon={<GroupIcon />} lines={['Group']} caret="below" muted />
          <Big w={88} icon={<RotateIcon />} lines={['Rotate']} caret="below" muted />
        </GroupBody>
        <GroupLabel>Arrange</GroupLabel>
      </Group>

      <CollapseButton width="20" height="12" viewBox="0 0 20 12" fill="none">
        <path d="M2 11 10 2l8 9" stroke={INK} strokeWidth="2" />
      </CollapseButton>
    </Ribbon>

    <FormulaBar>
      <NameBox>
        U23
        <Caret size={18} />
      </NameBox>
      <BarDots>⋮</BarDots>
      <FxBox>
        <CrossMark />
        <TickMark />
        <FxMark>fx</FxMark>
        <Caret size={14} />
      </FxBox>
      <FormulaInput>
        <Caret size={18} />
      </FormulaInput>
    </FormulaBar>

    <SheetArea>
      <GridPane>
        <ColumnHeaders>
          <div />
          {letters.map((letter) => (
            <ColumnLetter key={letter}>{letter}</ColumnLetter>
          ))}
          <SelectAll width="16" height="26" viewBox="0 0 16 26">
            <path d="M16 0v26H0z" fill="#d4d2d0" />
          </SelectAll>
        </ColumnHeaders>
        <Rows>
          <HeaderRow>
            <RowNumber>1</RowNumber>
            <HeaderCell $wide>product number</HeaderCell>
            <HeaderCell $nudge>Size</HeaderCell>
            <HeaderCell $nudge>Color</HeaderCell>
            {stockColumns.map((name) => (
              <HeaderCell key={name} $rule={name === 'Stock_6'}>
                {name}
              </HeaderCell>
            ))}
          </HeaderRow>
          {sheetRows.map(([product, size, color, stock], index) => (
            <DataRow key={index}>
              <RowNumber $current={index + 2 === 23}>{index + 2}</RowNumber>
              <Cell $tone="green" $end>
                {product}
              </Cell>
              <Cell $tone="green">{size}</Cell>
              <Cell $tone="green">{color}</Cell>
              {stock.split(' ').map((value, col) => (
                <Cell key={col} $tone={value.endsWith('*') ? 'dark' : 'blue'} $end>
                  {value.replace('*', '')}
                </Cell>
              ))}
            </DataRow>
          ))}
        </Rows>
      </GridPane>
      <VScroll>
        <Tri dir="up" />
        <VThumb />
        <Tri dir="down" />
      </VScroll>
    </SheetArea>

    <TabBar>
      <NavArrow $first>
        <Chevron dir="left" />
      </NavArrow>
      <NavArrow>
        <Chevron dir="right" />
      </NavArrow>
      <SheetTab>Stock</SheetTab>
      <SheetTab $active>
        Search
        <TabUnderline />
      </SheetTab>
      <AddSheet>
        <svg width="26" height="26" viewBox="0 0 26 26" fill="none">
          <path d="M13 1v24M1 13h24" stroke={INK} strokeWidth="2" />
        </svg>
      </AddSheet>
      <TabScroll>
        <TabDots>⋮</TabDots>
        <Tri dir="left" />
        <HThumb />
        <Tri dir="right" />
      </TabScroll>
    </TabBar>

    <StatusBar>
      <ReadyText>Ready</ReadyText>
      <StatusAccess>
        <AccessIcon />
        Accessibility: Investigate
      </StatusAccess>
      <ViewButtons>
        <ViewButton $on>
          <GridViewIcon />
        </ViewButton>
        <ViewButton>
          <PageViewIcon />
        </ViewButton>
        <ViewButton>
          <BreakViewIcon />
        </ViewButton>
        <ZoomBar>
          −
          <ZoomTrack>
            <ZoomThumb />
          </ZoomTrack>
          +
          <ZoomText>100%</ZoomText>
        </ZoomBar>
      </ViewButtons>
    </StatusBar>
    <BottomStrip />

    <FormulaNote>
      {noteLines.map((line, i) => (
        <NoteLine key={line} $tight={i === 0}>
          {line}
        </NoteLine>
      ))}
    </FormulaNote>

    <ArrowLayer width="3481" height="1873" viewBox="0 0 3481 1873">
      <path d="M1214.5 619.7 L1217.5 630.3 L2807 1073.4 L2805 1066.6 Z" fill="#f4a26f" />
      <path d="M1210 623 L1238 619 L1228 643 Z" fill="#f4a26f" />
    </ArrowLayer>

    <Watermark>
      <WatermarkLogo>مستقل</WatermarkLogo>
      <WatermarkName>mostaql.com</WatermarkName>
    </Watermark>
  </Page>
);

export default App;
